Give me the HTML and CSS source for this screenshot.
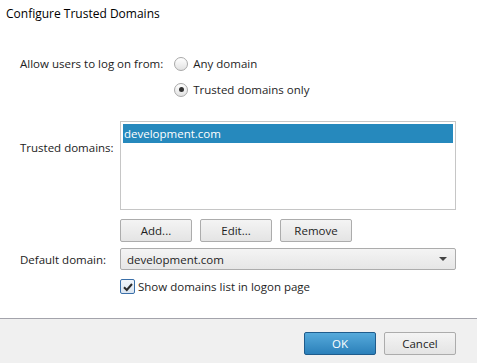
FILE: index.html
```html
<!DOCTYPE html>
<html lang="en">
<head>
    <meta charset="UTF-8">
    <title>Configure Trusted Domains</title>
    <link rel="stylesheet" href="styles.css">
</head>
<body>
    <div class="dialog">
        <div class="title">Configure Trusted Domains</div>

        <div class="content">
            <div class="logon-row">
                <span class="label">Allow users to log on from:</span>
                <div class="radios">
                    <label class="radio"><span class="dot"></span>Any domain</label>
                    <label class="radio checked"><span class="dot"></span>Trusted domains only</label>
                </div>
            </div>

            <div class="form-row list-row">
                <span class="label">Trusted domains:</span>
                <div>
                    <div class="listbox">
                        <div class="item selected">development.com</div>
                    </div>
                    <div class="buttons">
                        <button class="btn">Add...</button>
                        <button class="btn">Edit...</button>
                        <button class="btn">Remove</button>
                    </div>
                </div>
            </div>

            <div class="form-row select-row">
                <span class="label">Default domain:</span>
                <div class="select">
                    <span>development.com</span>
                    <span class="arrow"></span>
                </div>
            </div>

            <div class="form-row check-row">
                <span></span>
                <label class="check">
                    <span class="box">
                        <svg width="12" height="12" viewBox="0 0 12 12"><path d="M2 6.2 L4.8 9 L10 3" fill="none" stroke="#2b2b2b" stroke-width="2"/></svg>
                    </span>
                    Show domains list in logon page
                </label>
            </div>
        </div>

        <div class="footer">
            <button class="btn primary">OK</button>
            <button class="btn">Cancel</button>
        </div>
    </div>
</body>
</html>
```

FILE: styles.css
```css
body {
    margin: 0;
    background-color: #fff;
    font-family: "Open Sans", "Noto Sans", sans-serif;
    font-size: 11.5px;
    color: #1e1e1e;
}
.dialog {
    width: 477px;
    height: 363px;
    display: flex;
    flex-direction: column;
}
.title {
    padding: 5px 0 0 6px;
    height: 21px;
    font-size: 12px;
    color: #000;
}
.content {
    flex: 1;
    padding: 0 21px 0 20px;
}
.label {
    color: #222;
}
.logon-row {
    display: flex;
    margin-top: 29px;
}
.logon-row .label {
    padding-top: 1px;
    margin-right: 11px;
}
.radios {
    display: flex;
    flex-direction: column;
    gap: 9px;
}
.radio {
    display: flex;
    align-items: center;
    gap: 5px;
    height: 17px;
}
.dot {
    width: 12px;
    height: 12px;
    border: 1px solid #a8a8a8;
    border-radius: 50%;
    background: linear-gradient(#ffffff, #e2e2e2);
    display: flex;
    align-items: center;
    justify-content: center;
}
.radio.checked .dot::after {
    content: "";
    width: 5px;
    height: 5px;
    border-radius: 50%;
    background-color: #333;
}
.form-row {
    display: grid;
    grid-template-columns: 100px 336px;
}
.list-row {
    margin-top: 23px;
}
.list-row .label {
    padding-top: 19px;
}
.listbox {
    height: 83px;
    border: 1px solid #c6c6c6;
    padding: 2px;
}
.item {
    height: 19px;
    line-height: 19px;
    padding-left: 1px;
    font-size: 11.5px;
}
.item.selected {
    background-color: #2689bd;
    color: #fff;
}
.buttons {
    display: flex;
    gap: 8px;
    margin-top: 9px;
}
.btn {
    width: 72px;
    height: 23px;
    font-family: inherit;
    font-size: 11.5px;
    color: #1e1e1e;
    border: 1px solid #acacac;
    border-radius: 2px;
    background: linear-gradient(#f4f4f4, #e4e4e4);
    padding: 0;
}
.select-row {
    margin-top: 6px;
    align-items: center;
}
.select {
    height: 20px;
    border: 1px solid #acacac;
    border-radius: 2px;
    background: linear-gradient(#f4f4f4, #e6e6e6);
    display: flex;
    align-items: center;
    justify-content: space-between;
    padding: 0 8px 0 6px;
}
.arrow {
    width: 0;
    height: 0;
    border-left: 4px solid transparent;
    border-right: 4px solid transparent;
    border-top: 4px solid #444;
}
.check-row {
    margin-top: 9px;
}
.check {
    display: flex;
    align-items: center;
    gap: 3px;
}
.box {
    width: 13px;
    height: 13px;
    border: 1px solid #3a6fa8;
    border-radius: 2px;
    background: linear-gradient(#f2f6fb, #dbe5f0);
    display: flex;
    align-items: center;
    justify-content: center;
}
.footer {
    height: 45px;
    border-top: 1px solid #a3a3ab;
    background-color: #f0f0f0;
    display: flex;
    justify-content: flex-end;
    align-items: flex-start;
    gap: 8px;
    padding: 13px 21px 0 0;
    box-sizing: border-box;
}
.btn.primary {
    background: linear-gradient(#56aadb, #2b80ba);
    border-color: #1f5c8c;
    color: #fff;
}
```
